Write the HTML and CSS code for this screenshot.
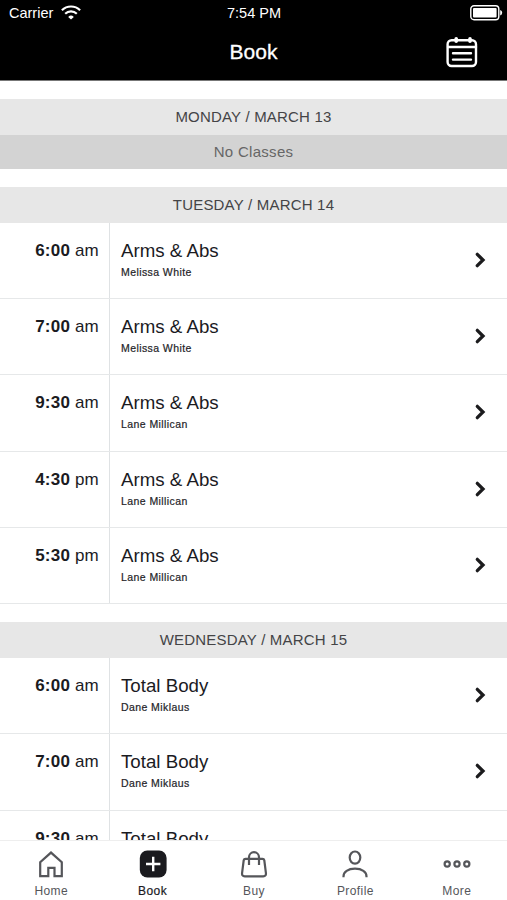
FILE: index.html
```html
<!DOCTYPE html>
<html lang="en">
<head>
<meta charset="utf-8">
<title>Book</title>
<link rel="stylesheet" href="styles.css">
</head>
<body>
<svg class="defs" width="0" height="0" aria-hidden="true"><symbol id="chev" viewBox="0 0 12 18"><path d="M3.3 3.3 9 9 3.3 14.7" fill="none" stroke="#1b1b1d" stroke-width="3.3" stroke-linecap="round"/></symbol></svg>
<div class="app">
  <header class="top">
    <div class="status">
      <div class="carrier">Carrier
        <svg width="20" height="15" viewBox="0 0 20 15" fill="none" stroke="#fff" stroke-width="2.2"><path d="M.9 5.2a13 13 0 0 1 18.2 0M4.2 8.8a8.3 8.3 0 0 1 11.6 0"/><path d="M10 14.6 7.2 11.9a4 4 0 0 1 5.6 0z" fill="#fff" stroke="none"/></svg>
      </div>
      <div class="clock">7:54 PM</div>
      <svg class="battery" width="33" height="16" viewBox="0 0 33 16"><rect x=".8" y=".8" width="28" height="14" rx="3.2" fill="none" stroke="#fff" stroke-width="1.4"/><rect x="3" y="3" width="23.6" height="9.6" rx="1" fill="#fff"/><path d="M30.2 5v5.6q2-.7 2-2.8t-2-2.8" fill="#fff"/></svg>
    </div>
    <div class="titlebar">
      <h1>Book</h1>
      <svg class="calendar" width="32" height="32" viewBox="0 0 32 32" fill="none" stroke="#fff" stroke-width="2.4" stroke-linecap="round"><rect x="1.6" y="4.2" width="28.4" height="25.8" rx="4"/><path d="M2 11h28M7 17.2h18M7 23.6h18"/><path d="M10.2 2.8v2.4M24 2.8v2.4" stroke-width="3.6"/></svg>
    </div>
  </header>
  <main class="schedule">
    <section class="day">
      <h2>MONDAY / MARCH 13</h2>
      <p class="empty">No Classes</p>
    </section>
    <section class="day">
      <h2>TUESDAY / MARCH 14</h2>
      <div class="row"><div class="time"><b>6:00</b> am</div><div class="info"><h3>Arms &amp; Abs</h3><p>Melissa White</p></div><svg class="chev"><use href="#chev"/></svg></div>
      <div class="row"><div class="time"><b>7:00</b> am</div><div class="info"><h3>Arms &amp; Abs</h3><p>Melissa White</p></div><svg class="chev"><use href="#chev"/></svg></div>
      <div class="row"><div class="time"><b>9:30</b> am</div><div class="info"><h3>Arms &amp; Abs</h3><p>Lane Millican</p></div><svg class="chev"><use href="#chev"/></svg></div>
      <div class="row"><div class="time"><b>4:30</b> pm</div><div class="info"><h3>Arms &amp; Abs</h3><p>Lane Millican</p></div><svg class="chev"><use href="#chev"/></svg></div>
      <div class="row"><div class="time"><b>5:30</b> pm</div><div class="info"><h3>Arms &amp; Abs</h3><p>Lane Millican</p></div><svg class="chev"><use href="#chev"/></svg></div>
    </section>
    <section class="day">
      <h2>WEDNESDAY / MARCH 15</h2>
      <div class="row"><div class="time"><b>6:00</b> am</div><div class="info"><h3>Total Body</h3><p>Dane Miklaus</p></div><svg class="chev"><use href="#chev"/></svg></div>
      <div class="row"><div class="time"><b>7:00</b> am</div><div class="info"><h3>Total Body</h3><p>Dane Miklaus</p></div><svg class="chev"><use href="#chev"/></svg></div>
      <div class="row"><div class="time"><b>9:30</b> am</div><div class="info"><h3>Total Body</h3></div><svg class="chev"><use href="#chev"/></svg></div>
    </section>
  </main>
  <nav class="tabs">
    <a class="tab"><svg viewBox="0 0 28 28"><path d="M3.2 26.2V12.3L14 2.6l10.8 9.7v13.9h-7.3v-8.3h-6.2v8.3z"/></svg>Home</a>
    <a class="tab active"><svg viewBox="0 0 28 28"><rect x=".8" y=".6" width="26.8" height="26.8" rx="7.5" fill="#1b1b1f" stroke="none"/><path d="M14.2 6.8v14.4M7 14h14.4" stroke="#fff" stroke-width="2.4"/></svg>Book</a>
    <a class="tab"><svg viewBox="0 0 28 28"><path d="M5.5 8.8h17q1.5 0 1.8 1.5l1.6 12.6q.4 3.4-2.6 3.4H4.7q-3 0-2.6-3.4l1.6-12.6q.3-1.5 1.8-1.5zM9 15V7.2a5 5 0 0 1 10 0V15"/></svg>Buy</a>
    <a class="tab"><svg viewBox="0 0 28 28"><ellipse cx="14" cy="7.6" rx="5.3" ry="6.1"/><path d="M2.5 27.2v-.8c0-4.6 4.5-7.7 11.5-7.7s11.5 3.1 11.5 7.7v.8"/></svg>Profile</a>
    <a class="tab"><svg viewBox="0 0 28 28"><circle cx="4.2" cy="14" r="2.6"/><circle cx="14" cy="14" r="2.6"/><circle cx="23.8" cy="14" r="2.6"/></svg>More</a>
  </nav>
</div>
</body>
</html>
```

FILE: styles.css
```css
* { box-sizing: border-box; }
body, h1, h2, h3, p { margin: 0; font-weight: normal; }
body { font-family: "Liberation Sans", Arial, sans-serif; background: #fff; color: #1b1b1f; }
.defs { position: absolute; }
.app { height: 900px; display: flex; flex-direction: column; overflow: hidden; }
.top { flex: none; height: 81px; background: #000; color: #fff; border-bottom: 1px solid #777; }
.status { height: 25px; display: grid; grid-template-columns: 1fr auto 1fr; align-items: center; padding: 0 4px 0 9px; font-size: 14.5px; }
.carrier { display: flex; align-items: center; gap: 8px; }
.clock { padding-right: 4px; }
.battery { justify-self: end; }
.titlebar { height: 54px; display: grid; grid-template-columns: 1fr auto 1fr; align-items: center; padding-right: 29px; padding-left: 29px; }
.titlebar h1 { grid-column: 2; font-size: 21px; line-height: 54px; -webkit-text-stroke: .3px #fff; }
.calendar { justify-self: end; }
.schedule { flex: 1; min-height: 0; overflow: hidden; padding-top: 17.6px; }
.day { margin-bottom: 18.5px; }
.day h2 { height: 36px; background: #e7e7e7; color: #444446; font-size: 15px; line-height: 35px; letter-spacing: .2px; text-align: center; }
.empty { height: 34px; background: #d3d3d3; color: #666; font-size: 15px; line-height: 33px; letter-spacing: .3px; text-align: center; }
.row { height: 76.15px; display: grid; grid-template-columns: 110px 1fr 12px; padding-right: 21px; border-bottom: 1px solid #e6e8e9; }
.time { border-right: 1px solid #dfe2e4; padding: 18px 10px 0 0; text-align: right; font-size: 17px; line-height: 20px; letter-spacing: .2px; }
.info { padding: 17px 0 0 11px; }
.info h3 { font-size: 18.7px; line-height: 22px; }
.info p { font-size: 10.5px; line-height: 14px; letter-spacing: .42px; margin-top: 3px; color: #242428; -webkit-text-stroke: .2px #242428; }
.chev { width: 12px; height: 18px; margin-top: 28px; }
.tabs { flex: none; height: 60px; display: grid; grid-template-columns: repeat(5, 1fr); border-top: 1px solid #eee; background: #fff; }
.tab { display: flex; flex-direction: column; align-items: center; padding-top: 9px; padding-left: 1px; font-size: 12px; line-height: 16px; letter-spacing: .4px; color: #55565a; gap: 5px; }
.tab svg { width: 28px; height: 28px; fill: none; stroke: #55565a; stroke-width: 2.2; }
.tab.active { color: #1b1b1f; -webkit-text-stroke: .2px #1b1b1f; }
```
